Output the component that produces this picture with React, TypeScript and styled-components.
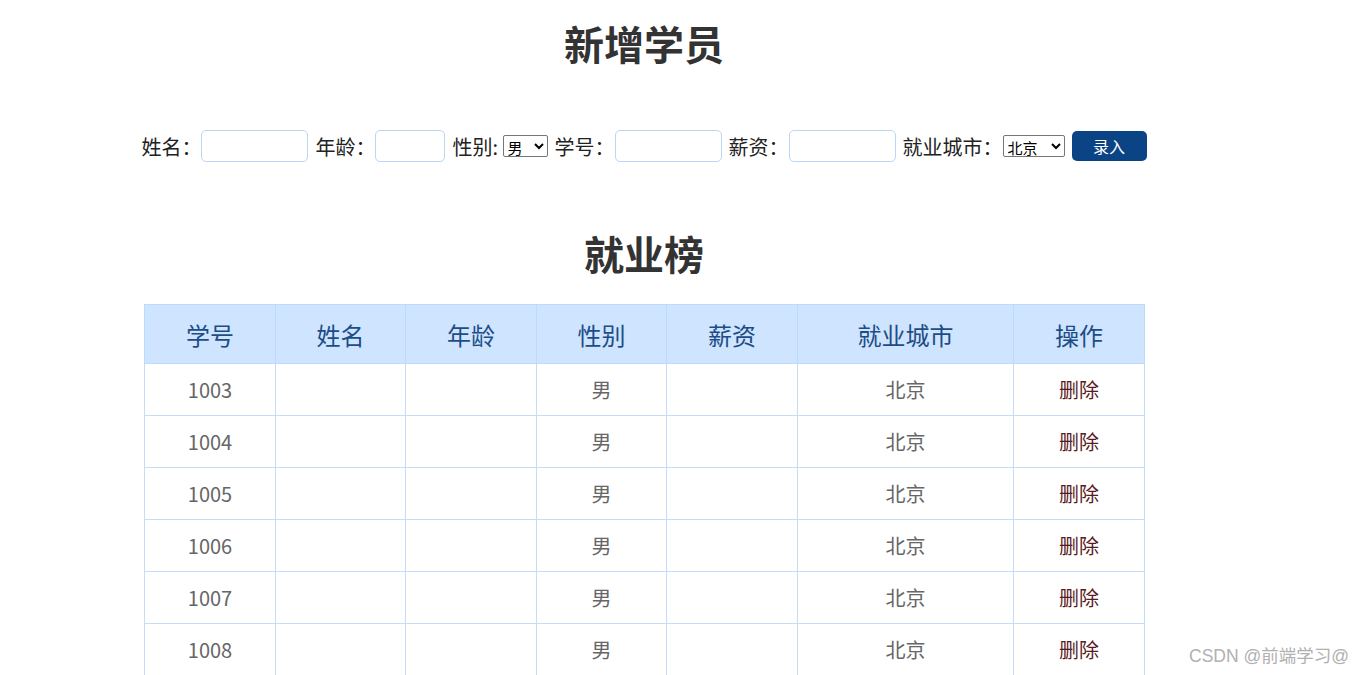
import React, { FC } from "react";
import styled, { createGlobalStyle } from "styled-components";

const GlobalStyle = createGlobalStyle`
  body {
    margin: 0;
    background: #fff;
    font-family: "Noto Sans CJK SC", "Noto Sans", sans-serif;
    color: #222;
    overflow: hidden;
  }
`;

const rows = [1003, 1004, 1005, 1006, 1007, 1008];

const columns = [
  { title: "学号", width: 131 },
  { title: "姓名", width: 130 },
  { title: "年龄", width: 131 },
  { title: "性别", width: 130 },
  { title: "薪资", width: 131 },
  { title: "就业城市", width: 216 },
  { title: "操作", width: 131 },
];

const App: FC = () => {
  return (
    <>
      <GlobalStyle />
      <ScPage>
        <ScTitle>新增学员</ScTitle>
        <ScForm>
          <ScField>
            姓名：<ScInput $w={107} />
          </ScField>
          <ScField>
            年龄：<ScInput $w={70} />
          </ScField>
          <ScField>
            性别:&nbsp;
            <ScSelect defaultValue="男" $w={45}>
              <option>男</option>
              <option>女</option>
            </ScSelect>
          </ScField>
          <ScField>
            学号：<ScInput $w={107} />
          </ScField>
          <ScField>
            薪资：<ScInput $w={107} />
          </ScField>
          <ScField>
            就业城市：
            <ScSelect defaultValue="北京" $w={62}>
              <option>北京</option>
              <option>上海</option>
              <option>广州</option>
              <option>深圳</option>
            </ScSelect>
          </ScField>
          <ScButton>录入</ScButton>
        </ScForm>
        <ScSubTitle>就业榜</ScSubTitle>
        <ScTable>
          <colgroup>
            {columns.map((c) => (
              <col key={c.title} style={{ width: c.width }} />
            ))}
          </colgroup>
          <thead>
            <tr>
              {columns.map((c) => (
                <ScTh key={c.title}>{c.title}</ScTh>
              ))}
            </tr>
          </thead>
          <tbody>
            {rows.map((id) => (
              <tr key={id}>
                <ScTd>{id}</ScTd>
                <ScTd></ScTd>
                <ScTd></ScTd>
                <ScTd>男</ScTd>
                <ScTd></ScTd>
                <ScTd>北京</ScTd>
                <ScTd $action>删除</ScTd>
              </tr>
            ))}
          </tbody>
        </ScTable>
      </ScPage>
      <ScWatermark>CSDN @前端学习@</ScWatermark>
    </>
  );
};

export default App;

const ScPage = styled.div`
  width: 1000px;
  margin-left: 144px;
`;

const ScTitle = styled.h1`
  margin: 0;
  padding-top: 19px;
  height: 48px;
  line-height: 48px;
  text-align: center;
  font-size: 40px;
  font-weight: 700;
  color: #333;
`;

const ScForm = styled.div`
  display: flex;
  justify-content: center;
  align-items: center;
  gap: 7px;
  margin: 63px -20px 0;
  height: 32px;
  font-size: 20px;
  color: #222;
  white-space: nowrap;
`;

const ScField = styled.label`
  display: flex;
  align-items: center;
  flex-shrink: 0;
`;

const ScInput = styled.input<{ $w: number }>`
  box-sizing: border-box;
  flex-shrink: 0;
  width: ${({ $w }) => $w}px;
  height: 32px;
  border: 1px solid #bcd6f5;
  border-radius: 5px;
  outline: none;
`;

const ScSelect = styled.select<{ $w: number }>`
  box-sizing: border-box;
  flex-shrink: 0;
  width: ${({ $w }) => $w}px;
  height: 22px;
  font-size: 15px;
  font-family: "Noto Sans CJK SC", sans-serif;
  padding: 0;
  border: 1px solid #767676;
  border-radius: 2px;
  background: #fff;
  color: #000;
`;

const ScButton = styled.button`
  flex-shrink: 0;
  width: 75px;
  height: 30px;
  border: none;
  border-radius: 5px;
  background: #0b4485;
  color: #fff;
  font-size: 16px;
  font-family: "Noto Sans CJK SC", sans-serif;
`;

const ScSubTitle = styled.h2`
  margin: 67px 0 0;
  height: 48px;
  line-height: 48px;
  text-align: center;
  font-size: 40px;
  font-weight: 700;
  color: #333;
`;

const ScTable = styled.table`
  margin-top: 27px;
  width: 1000px;
  border-collapse: collapse;
  table-layout: fixed;
`;

const ScTh = styled.th`
  height: 58px;
  padding: 0;
  border: 1px solid #bcdafc;
  background: #cfe4fe;
  color: #1c4d87;
  font-size: 24px;
  font-weight: 400;
  text-align: center;
`;

const ScTd = styled.td<{ $action?: boolean }>`
  height: 51px;
  padding: 0;
  border: 1px solid #c4dcf7;
  color: ${({ $action }) => ($action ? "#5a1a22" : "#666")};
  font-size: 20px;
  text-align: center;
`;

const ScWatermark = styled.div`
  position: absolute;
  right: 14px;
  bottom: 8px;
  font-size: 17.5px;
  color: #b0b0b0;
  font-family: "Liberation Sans", "Noto Sans CJK SC", sans-serif;
`;
